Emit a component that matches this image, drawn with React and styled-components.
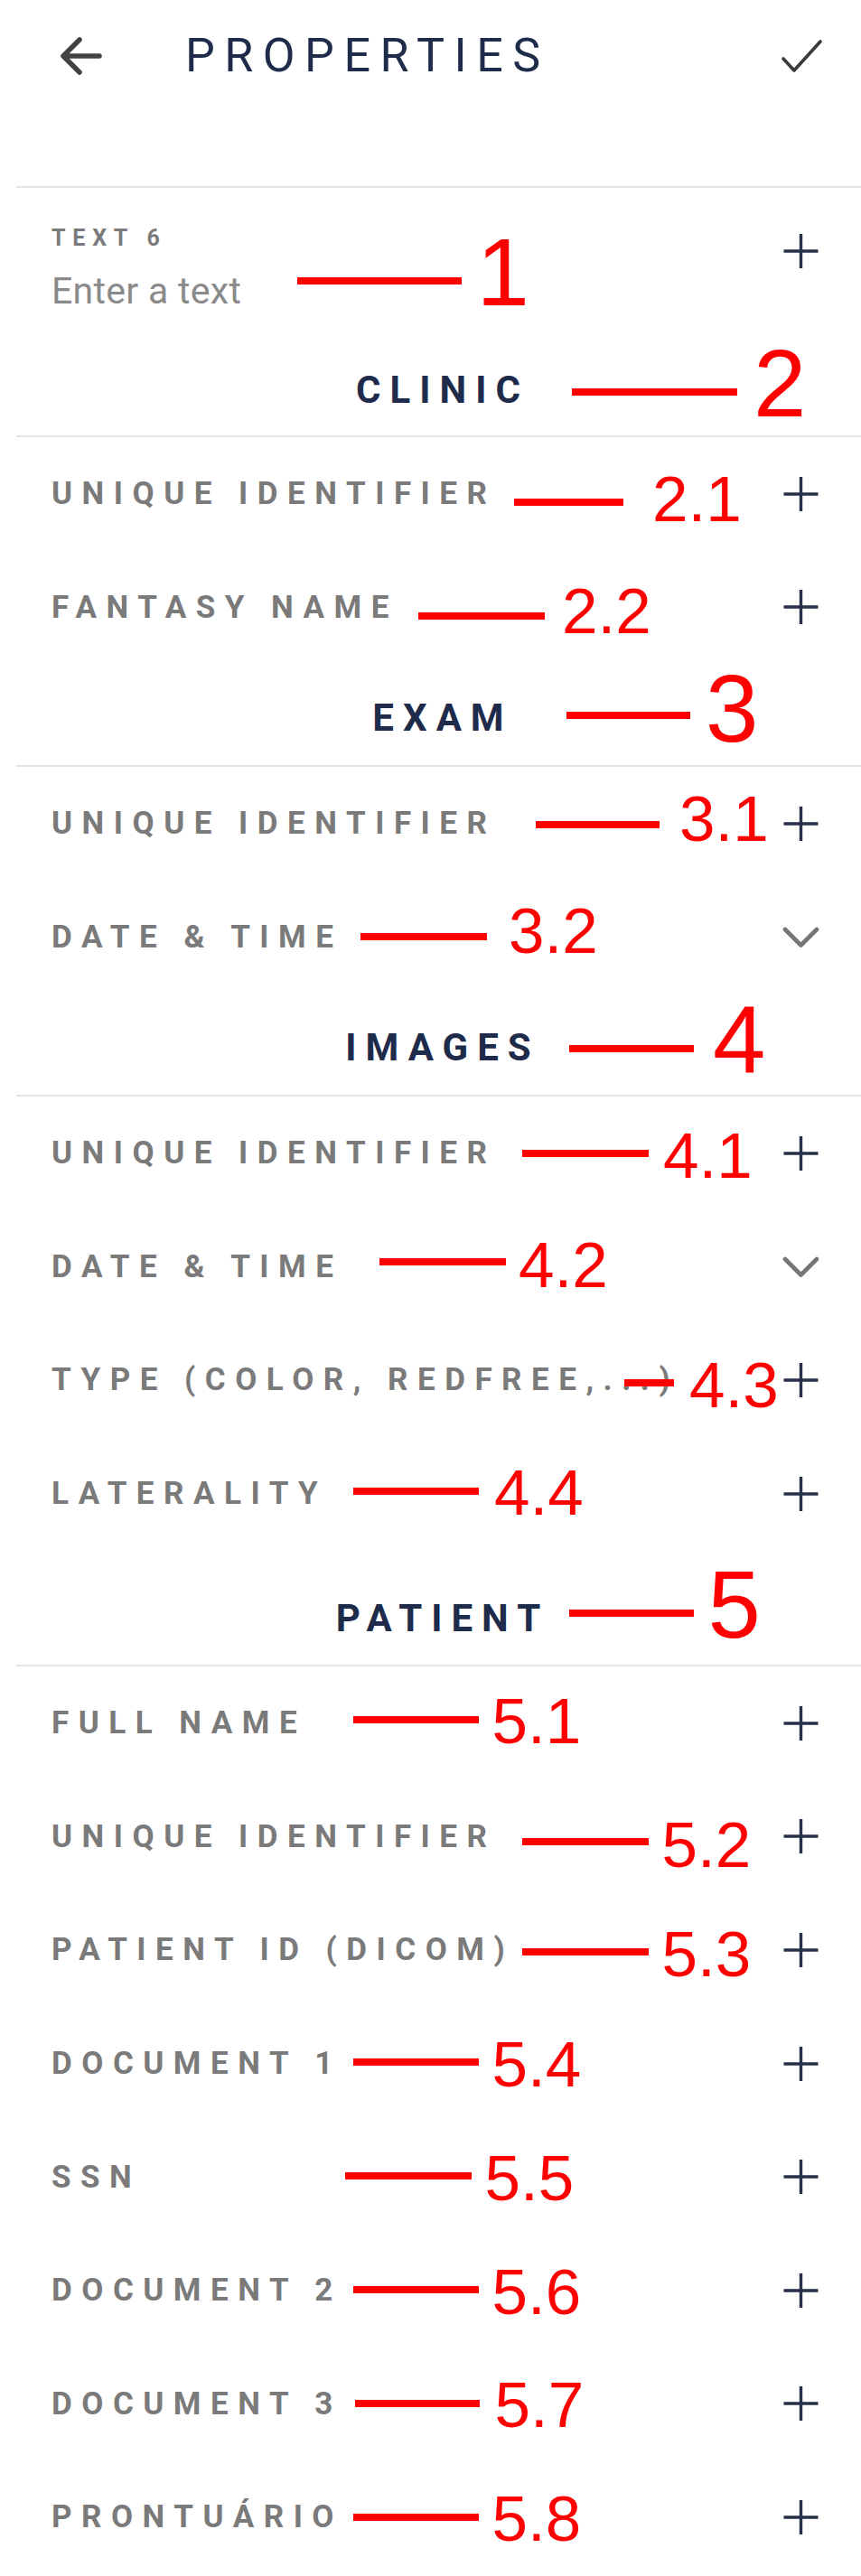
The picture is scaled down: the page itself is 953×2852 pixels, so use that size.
import React from 'react';
import styled, { createGlobalStyle } from 'styled-components';

const GlobalStyle = createGlobalStyle`
  html, body {
    margin: 0;
    padding: 0;
    background: #ffffff;
  }
  body {
    font-family: Roboto, "Noto Sans", Arial, sans-serif;
    overflow-x: hidden;
  }
`;

const NAVY = '#1e2b4a';
const GRAY = '#7a7a7a';
const RED = '#ff0000';

const sections = [
  {
    title: 'CLINIC',
    top: 33,
    bottom: 25,
    note: { x: 633, w: 183, gap: 18, y: 60, ny: -9.5, text: '2', big: true },
    rows: [
      { label: 'UNIQUE IDENTIFIER', note: { x: 569, w: 121, gap: 32, y: 72, ny: -3.5, text: '2.1' } },
      { label: 'FANTASY NAME', note: { x: 463, w: 140, gap: 19, y: 72.4, ny: -5.5, text: '2.2' } },
    ],
  },
  {
    title: 'EXAM',
    top: 34.8,
    bottom: 27,
    note: { x: 627, w: 137, gap: 17, y: 56.8, ny: -7.5, text: '3', big: true },
    rows: [
      { label: 'UNIQUE IDENTIFIER', note: { x: 593, w: 137, gap: 22, y: 64, ny: -6, text: '3.1' } },
      { label: 'DATE & TIME', icon: 'chevron', note: { x: 399, w: 140, gap: 24, y: 62.4, ny: -6, text: '3.2' } },
    ],
  },
  {
    title: 'IMAGES',
    top: 34.8,
    bottom: 27,
    note: { x: 630, w: 138, gap: 21, y: 60.8, ny: -9.5, text: '4', big: true },
    rows: [
      { label: 'UNIQUE IDENTIFIER', note: { x: 578, w: 140, gap: 16, y: 63, ny: 3, text: '4.1' } },
      { label: 'DATE & TIME', icon: 'chevron', note: { x: 420, w: 140, gap: 14, y: 57.4, ny: 3.5, text: '4.2' } },
      { label: 'TYPE (COLOR, REDFREE,...)', note: { x: 691, w: 55, gap: 17, y: 65.8, ny: 3, text: '4.3' } },
      { label: 'LATERALITY', note: { x: 391, w: 139, gap: 17, y: 60.2, ny: 1.5, text: '4.4' } },
    ],
  },
  {
    title: 'PATIENT',
    top: 50.6,
    bottom: 26,
    note: { x: 630, w: 138, gap: 15.5, y: 69.6, ny: -9.5, text: '5', big: true },
    rows: [
      { label: 'FULL NAME', note: { x: 391, w: 139, gap: 14.5, y: 59, ny: 2, text: '5.1' } },
      { label: 'UNIQUE IDENTIFIER', note: { x: 578, w: 140, gap: 14.5, y: 68.4, ny: 3.5, text: '5.2' } },
      { label: 'PATIENT ID (DICOM)', note: { x: 578, w: 140, gap: 14.5, y: 64.8, ny: 3, text: '5.3' } },
      { label: 'DOCUMENT 1', note: { x: 391, w: 139, gap: 14.5, y: 61.2, ny: 3, text: '5.4' } },
      { label: 'SSN', note: { x: 382, w: 140, gap: 14.5, y: 61.6, ny: 3, text: '5.5' } },
      { label: 'DOCUMENT 2', note: { x: 391, w: 139, gap: 14.5, y: 62, ny: 3, text: '5.6' } },
      { label: 'DOCUMENT 3', note: { x: 393, w: 138, gap: 16.5, y: 62.4, ny: 2, text: '5.7' } },
      { label: 'PRONTUÁRIO', note: { x: 391, w: 139, gap: 14.5, y: 62.8, ny: 2, text: '5.8' } },
    ],
  },
];

const BackIcon = () => (
  <svg width="52" height="48" viewBox="0 0 52 48" fill="none">
    <path d="M24 6 L6 24 L24 42 M6 24 H46" stroke="#424242" strokeWidth="5.5" strokeLinecap="round" strokeLinejoin="round" />
  </svg>
);

const CheckIcon = () => (
  <svg width="50" height="42" viewBox="0 0 50 42" fill="none">
    <path d="M5 24 L17 37 L46 5" stroke="#3a3a3a" strokeWidth="3.6" strokeLinecap="round" strokeLinejoin="round" />
  </svg>
);

const PlusIcon = () => (
  <svg width="41" height="40" viewBox="0 0 41 40" fill="none">
    <path d="M20.5 1 V39 M1.5 20 H39.5" stroke="#27304b" strokeWidth="3.4" />
  </svg>
);

const ChevronIcon = () => (
  <svg width="41" height="40" viewBox="0 0 41 40" fill="none">
    <path d="M3 12 L20.5 29.5 L38 12" stroke="#757575" strokeWidth="4.6" strokeLinecap="round" strokeLinejoin="round" />
  </svg>
);

const Note = ({ note }) => (
  <Annotation $x={note.x} $y={note.y}>
    <Mark $w={note.w} />
    <Num $big={note.big} $gap={note.gap} $ny={note.ny}>{note.text}</Num>
  </Annotation>
);

export default function App() {
  return (
    <Page>
      <GlobalStyle />
      <TopBar>
        <BackIcon />
        <Title>PROPERTIES</Title>
        <CheckIcon />
      </TopBar>

      <Body>
        <Divider />
        <TextField>
          <FieldText>
            <Caption>TEXT 6</Caption>
            <Placeholder>Enter a text</Placeholder>
          </FieldText>
          <IconSlot $offset={9}>
            <PlusIcon />
          </IconSlot>
          <Note note={{ x: 329, w: 182, gap: 16.5, y: 103, ny: -9.5, text: '1', big: true }} />
        </TextField>

        {sections.map((section) => (
          <Section key={section.title}>
            <SectionHeader $top={section.top} $bottom={section.bottom}>
              <SectionTitle>{section.title}</SectionTitle>
              <Note note={section.note} />
            </SectionHeader>
            <Divider />
            {section.rows.map((row) => (
              <Row key={row.note.text}>
                <Label>{row.label}</Label>
                <IconSlot>{row.icon === 'chevron' ? <ChevronIcon /> : <PlusIcon />}</IconSlot>
                <Note note={row.note} />
              </Row>
            ))}
          </Section>
        ))}
      </Body>
    </Page>
  );
}

const Page = styled.div`
  width: 953px;
  min-height: 2852px;
  background: #ffffff;
  overflow: hidden;
`;

const TopBar = styled.header`
  height: 124px;
  display: flex;
  align-items: center;
  padding: 0 41px 0 64px;
  box-sizing: border-box;
`;

const Title = styled.h1`
  flex: 1;
  margin: 0 0 0 89px;
  font-size: 52px;
  font-weight: 400;
  line-height: 1;
  letter-spacing: 10.5px;
  color: ${NAVY};
`;

const Body = styled.main`
  padding-top: 82px;
`;

const Divider = styled.div`
  height: 2px;
  margin-left: 18px;
  background: #e4e4e4;
`;

const TextField = styled.div`
  position: relative;
  display: flex;
  justify-content: space-between;
  align-items: flex-start;
  padding: 41px 46px 28px 57px;
`;

const FieldText = styled.div`
  display: flex;
  flex-direction: column;
`;

const Caption = styled.span`
  font-size: 25px;
  font-weight: 700;
  line-height: 30px;
  letter-spacing: 7.8px;
  color: ${GRAY};
`;

const Placeholder = styled.span`
  margin-top: 19px;
  font-size: 41px;
  font-weight: 400;
  line-height: 48px;
  letter-spacing: 0.3px;
  color: #8a8a8a;
`;

const IconSlot = styled.div`
  display: flex;
  margin-top: ${(p) => p.$offset || 0}px;
`;

const Section = styled.section`
  display: flex;
  flex-direction: column;
`;

const SectionHeader = styled.div`
  position: relative;
  padding: ${(p) => p.$top}px 0 ${(p) => p.$bottom}px 27px;
  text-align: center;
`;

const SectionTitle = styled.h2`
  margin: 0;
  font-size: 42px;
  font-weight: 700;
  line-height: 50px;
  letter-spacing: 10px;
  color: ${NAVY};
`;

const Row = styled.div`
  position: relative;
  height: 125.6px;
  display: flex;
  align-items: center;
  justify-content: space-between;
  padding: 0 46px 0 57px;
  box-sizing: border-box;
`;

const Label = styled.span`
  font-size: 35px;
  font-weight: 700;
  line-height: 1;
  letter-spacing: 10.5px;
  color: ${GRAY};
  white-space: nowrap;
`;

const Annotation = styled.div`
  position: absolute;
  left: ${(p) => p.$x}px;
  top: ${(p) => p.$y - 4}px;
  height: 8px;
  display: flex;
  align-items: center;
  pointer-events: none;
`;

const Mark = styled.span`
  flex: none;
  width: ${(p) => p.$w}px;
  height: 8px;
  background: ${RED};
`;

const Num = styled.span`
  position: relative;
  top: ${(p) => p.$ny}px;
  margin-left: ${(p) => p.$gap}px;
  font-family: "Liberation Sans", Arial, sans-serif;
  font-size: ${(p) => (p.$big ? 105 : 71)}px;
  line-height: 1;
  color: ${RED};
  white-space: nowrap;
`;
